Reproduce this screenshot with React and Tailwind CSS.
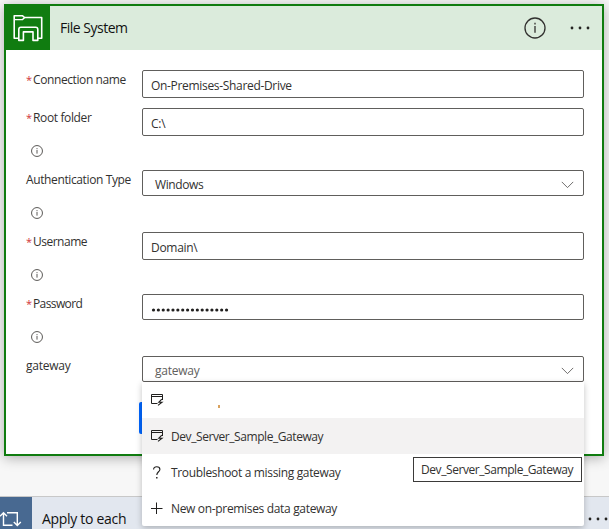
const field = 'flex w-[442px] items-center rounded-[2px] border border-[#605e5c] bg-white';

function InfoIcon({ size, glyph, className }) {
  return (
    <svg width={size} height={size} viewBox="0 0 20 20" fill="none" stroke="currentColor" className={className}>
      <circle cx="10" cy="10" r="9.1" strokeWidth={glyph} />
      <path d="M10 8.2V14.4" strokeWidth={glyph} />
      <path d="M10 5.2V6.8" strokeWidth={glyph} />
    </svg>
  );
}

function Chevron() {
  return (
    <svg width="13" height="8" viewBox="0 0 13 8" fill="none" stroke="#605e5c" strokeWidth="0.9" className="mt-[3px] ml-auto mr-[9px]">
      <path d="M0.8 0.9L6.5 6.6L12.2 0.9" />
    </svg>
  );
}

function Dots() {
  return (
    <svg width="20" height="4" viewBox="0 0 20 4" fill="#252423">
      <circle cx="2" cy="2" r="1.4" />
      <circle cx="10" cy="2" r="1.4" />
      <circle cx="18" cy="2" r="1.4" />
    </svg>
  );
}

function FolderIcon() {
  return (
    <svg width="32" height="28" viewBox="0 0 32 28" fill="none" stroke="#fff" strokeWidth="1.6" strokeLinejoin="round">
      <path d="M6.5 24.2H2.2V1.8H10.6L12.6 3.5H29.7V24.2H26" />
      <path d="M2.2 5.6H10.6L12.6 3.5" strokeWidth="1.4" />
      <path d="M6.8 26.4V15.4Q6.8 13.3 8.9 13.3H23.7Q25.8 13.3 25.8 15.4V26.4H21V17.9H11.4V26.4Z" />
    </svg>
  );
}

function GatewayIcon() {
  return (
    <svg width="13" height="12" viewBox="0 0 13 12" fill="none" stroke="#201f1e">
      <path d="M6.5 9.5H0.5V0.5H11.5V6" />
      <path d="M0.5 2.5H11.5" />
      <path d="M10.8 5.2L7.8 8.3H11L7 11.4" strokeWidth="1.1" />
    </svg>
  );
}

function QuestionIcon() {
  return (
    <svg width="13" height="13" viewBox="0 0 13 13" fill="none" stroke="#201f1e" strokeWidth="1.1">
      <path d="M2.6 3.5C2.6 1.6 4 0.7 5.7 0.7S8.9 1.7 8.9 3.4C8.9 5.7 5.8 5.9 5.8 8.9" />
      <path d="M5.8 10.9V12.5" strokeWidth="1.4" />
    </svg>
  );
}

function PlusIcon() {
  return (
    <svg width="13" height="13" viewBox="0 0 13 13" fill="none" stroke="#201f1e">
      <path d="M5.5 0.5V12M0 6.5H11.5" />
    </svg>
  );
}

function LoopIcon() {
  return (
    <svg width="24" height="18" viewBox="0 0 24 18" fill="none" stroke="#fff" strokeWidth="1.4">
      <path d="M14.5 15.3H5.5V2.8M2 6.2L5.5 2.7L9 6.2" />
      <path d="M9 2.7H19.3V15.4M15.8 12L19.3 15.5L22.8 12" />
    </svg>
  );
}

function PasswordDots() {
  return (
    <svg width="80" height="4" viewBox="0 0 80 4" fill="#201f1e">
      {Array.from({ length: 16 }, (_, i) => (
        <circle key={i} cx={2.5 + i * 4.87} cy="2" r="1.6" />
      ))}
    </svg>
  );
}

function Row({ label, required, info, track, children }) {
  return (
    <div className={info ? 'flex h-[62px] items-start' : 'flex h-[38px] items-start'}>
      <div className="w-[116px] shrink-0">
        <div className="flex h-5 items-center whitespace-nowrap text-[12px] leading-5 text-[#323130]">
          {required && <span className="-mt-[1px] w-[7px] text-[11px] text-[#d13438]">*</span>}
          <span className={track}>{label}</span>
        </div>
        {info && <InfoIcon size={12} glyph={1.5} className="mt-[16.5px] ml-[5px] text-[#484644]" />}
      </div>
      {children}
    </div>
  );
}

function Option({ icon, text, active, track }) {
  return (
    <div className={active ? 'flex h-9 items-center bg-[#f3f2f2] pl-[9px]' : 'flex h-9 items-center pl-[9px]'}>
      <span className="w-5">{icon}</span>
      <span className={track}>{text}</span>
    </div>
  );
}

export default function App() {
  return (
    <div className="relative h-[529px] w-[609px] overflow-hidden bg-[#f7f7f7] pt-1 font-['Open_Sans','Noto_Sans',sans-serif] text-[12px] text-[#323130]">
      <div className="relative ml-1 h-[452px] w-[600px] border-2 border-[#107c10] bg-white shadow-[0_2px_12px_rgba(0,0,0,0.3)]">
        <header className="flex h-11 items-center bg-[#dbebdc]">
          <div className="flex h-11 w-11 items-center justify-center bg-[#107c10]">
            <FolderIcon />
          </div>
          <span className="-mt-[1px] ml-[10px] text-[14px] tracking-[-0.5px] text-[#111]">File System</span>
          <InfoIcon size={22} glyph={1.2} className="-mt-[1px] ml-auto text-[#323130]" />
          <span className="mr-[12px] ml-[24px]"><Dots /></span>
        </header>

        <div className="pt-5 pl-5">
          <Row label="Connection name" required track="tracking-[-0.4px]">
            <div className={field + ' h-7 pt-[3px] pl-2'}><span className="tracking-[-0.32px]">On-Premises-Shared-Drive</span></div>
          </Row>
          <Row label="Root folder" required info track="tracking-[-0.37px]">
            <div className={field + ' h-7 pt-[3px] pl-2'}><span className="tracking-[-0.2px]">C:\</span></div>
          </Row>
          <Row label="Authentication Type" info track="tracking-[-0.38px]">
            <div className={field + ' h-[26px] pl-3'}>
              <span className="mt-[4px] tracking-[-0.4px]">Windows</span>
              <Chevron />
            </div>
          </Row>
          <Row label="Username" required info track="tracking-[-0.5px]">
            <div className={field + ' h-7 pt-[3px] pl-2'}><span className="tracking-[-0.3px]">Domain\</span></div>
          </Row>
          <Row label="Password" required info track="tracking-[-0.6px]">
            <div className={field + ' h-[26px] pt-[5px] pl-2'}>
              <PasswordDots />
            </div>
          </Row>
          <Row label="gateway" track="tracking-[-0.25px]">
            <div className={field + ' h-[26px] pl-3 text-[#605e5c]'}>
              <span className="mt-[4px] tracking-[-0.25px]">gateway</span>
              <Chevron />
            </div>
          </Row>
          <div className="mt-2 ml-[113px] h-8 w-20 rounded-[2px] bg-[#0066ff]" />
        </div>
      </div>

      <div className="mt-10 flex h-11 border-t border-[#c8c8c8] bg-[#e2e7ef]">
        <div className="flex w-8 items-start bg-[#486991] pt-[13px]">
          <span className="-ml-[2px]"><LoopIcon /></span>
        </div>
        <span className="mt-3 ml-[10px] text-[14px] leading-5 tracking-[-0.3px] text-[#111]">Apply to each</span>
        <span className="mt-[20px] mr-[1px] ml-auto"><Dots /></span>
      </div>

      <div className="absolute top-[382px] left-[142px] w-[442px] rounded-b-[2px] bg-white text-[#323130] shadow-[0_2px_6px_rgba(0,0,0,0.24)]">
        <Option
          icon={<GatewayIcon />}
          text={<span className="mt-[12px] ml-[47px] block h-[3px] w-[2px] bg-[#d9a25f]" />}
        />
        <Option icon={<GatewayIcon />} text="Dev_Server_Sample_Gateway" active track="mt-[2px] tracking-[-0.43px]" />
        <Option icon={<QuestionIcon />} text="Troubleshoot a missing gateway" track="mt-[2px] tracking-[-0.34px]" />
        <Option icon={<PlusIcon />} text="New on-premises data gateway" track="mt-[2px] tracking-[-0.33px]" />
      </div>

      <div className="absolute top-[457px] left-[413px] flex h-[25px] w-[169px] items-center border border-[#3b3a39] bg-white pt-[1px] pl-[7px]">
        <span className="tracking-[-0.43px]">Dev_Server_Sample_Gateway</span>
      </div>
    </div>
  );
}
